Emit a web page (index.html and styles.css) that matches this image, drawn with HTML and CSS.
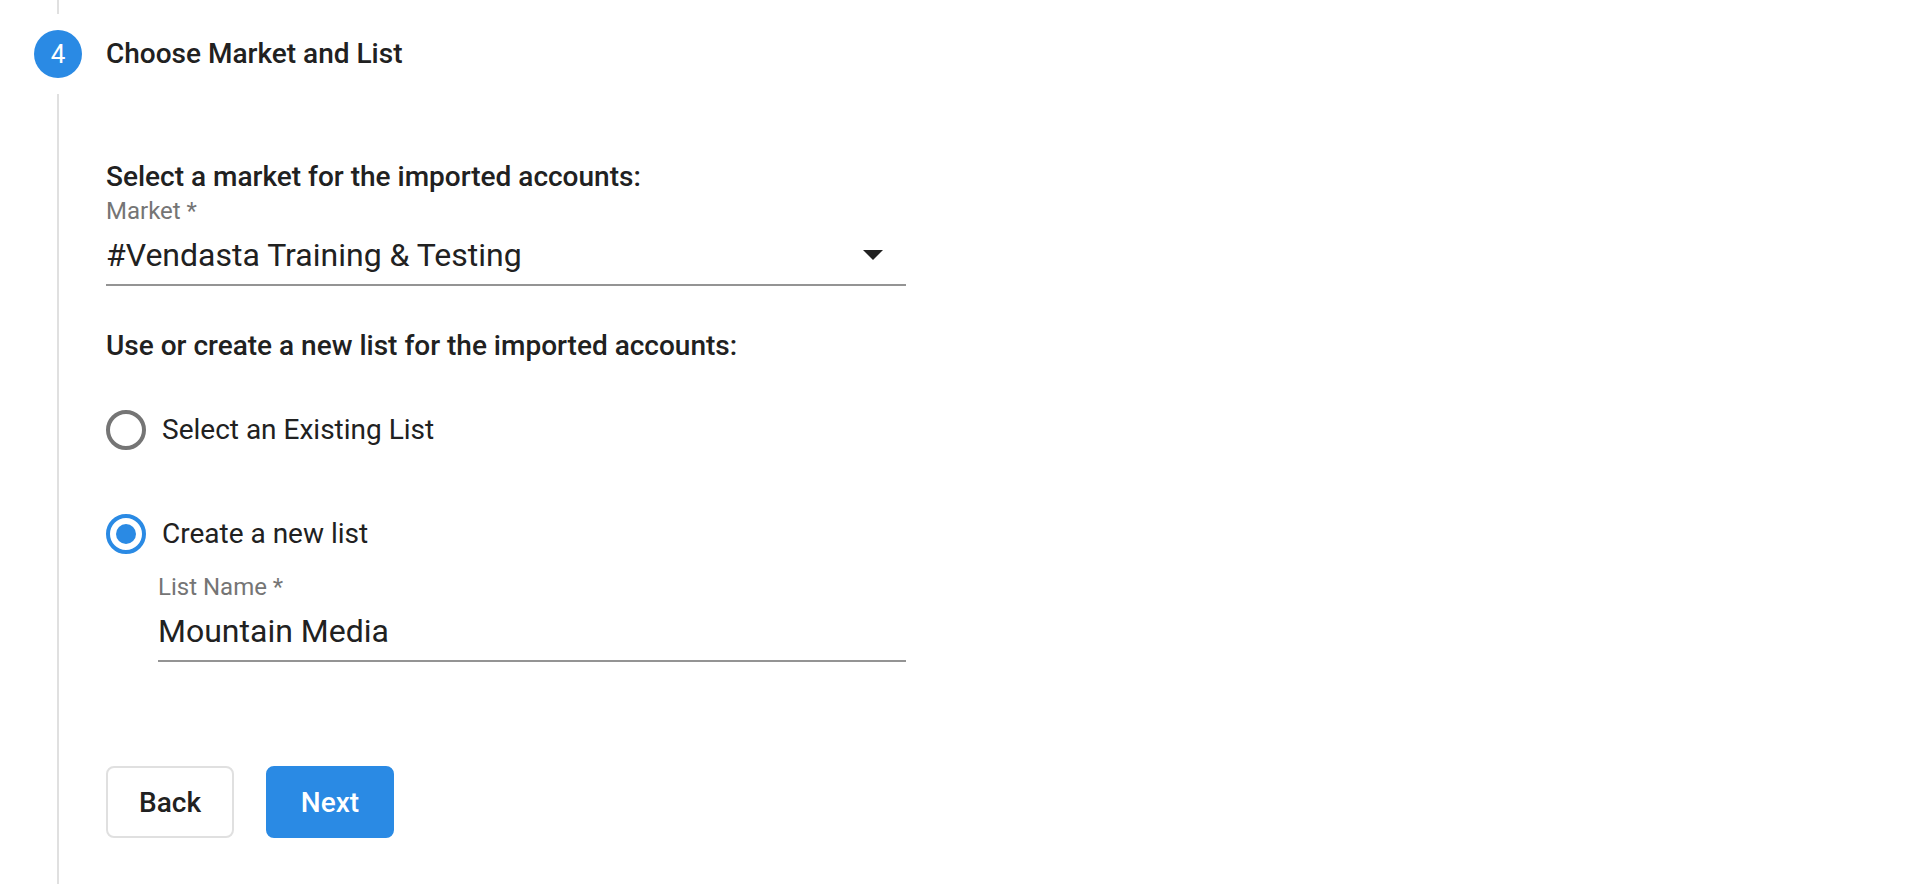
FILE: index.html
```html
<!DOCTYPE html>
<html lang="en">
<head>
<meta charset="utf-8">
<title>Choose Market and List</title>
<link rel="stylesheet" href="styles.css">
</head>
<body>
<div class="stepper">
  <div class="rail-top"></div>
  <div class="step-header">
    <div class="step-icon">4</div>
    <div class="step-title">Choose Market and List</div>
  </div>
  <div class="step-content">
    <div class="section-title">Select a market for the imported accounts:</div>
    <div class="field market-field">
      <div class="field-label">Market *</div>
      <div class="field-control">
        <span class="field-value">#Vendasta Training &amp; Testing</span>
        <span class="select-arrow"></span>
      </div>
    </div>
    <div class="section-title list-title">Use or create a new list for the imported accounts:</div>
    <div class="radio-group">
      <div class="radio-row">
        <span class="radio"></span>
        <span class="radio-label">Select an Existing List</span>
      </div>
      <div class="radio-row">
        <span class="radio checked"></span>
        <span class="radio-label">Create a new list</span>
      </div>
    </div>
    <div class="field list-field">
      <div class="field-label">List Name *</div>
      <div class="field-control">
        <span class="field-value">Mountain Media</span>
      </div>
    </div>
    <div class="actions">
      <button class="btn btn-back">Back</button>
      <button class="btn btn-next">Next</button>
    </div>
  </div>
</div>
</body>
</html>
```
FILE: styles.css
```css
html, body {
  margin: 0;
  padding: 0;
  background: #ffffff;
}
body {
  font-family: Roboto, "Noto Sans", Arial, sans-serif;
  color: #212121;
  overflow: hidden;
}
.stepper {
  display: flex;
  flex-direction: column;
}
.rail-top {
  width: 2px;
  height: 14px;
  margin-left: 57px;
  background: #e0e0e0;
}
.step-header {
  display: flex;
  align-items: center;
  height: 80px;
  padding-left: 34px;
}
.step-icon {
  width: 48px;
  height: 48px;
  border-radius: 50%;
  background: #2a8ae4;
  color: #ffffff;
  font-size: 26px;
  display: flex;
  align-items: center;
  justify-content: center;
}
.step-title {
  margin-left: 24px;
  font-size: 28px;
  font-weight: 500;
  line-height: 36px;
}
.step-content {
  margin-left: 57px;
  border-left: 2px solid #e0e0e0;
  padding-left: 47px;
  padding-top: 65px;
  min-height: 790px;
  box-sizing: border-box;
}
.section-title {
  font-size: 28px;
  font-weight: 500;
  line-height: 36px;
  color: #212121;
}
.field {
  width: 800px;
}
.market-field {
  margin-top: 2px;
}
.field-label {
  font-size: 24px;
  line-height: 28px;
  color: #757575;
}
.field-control {
  display: flex;
  align-items: center;
  margin-top: 10px;
  padding-bottom: 9px;
  border-bottom: 2px solid #949494;
}
.field-value {
  flex: 1;
  font-size: 32px;
  line-height: 40px;
  color: #212121;
}
.select-arrow {
  width: 0;
  height: 0;
  border-left: 10px solid transparent;
  border-right: 10px solid transparent;
  border-top: 10px solid #222222;
  margin-right: 23px;
}
.list-title {
  margin-top: 42px;
}
.radio-group {
  display: flex;
  flex-direction: column;
  gap: 64px;
  margin-top: 46px;
}
.radio-row {
  display: flex;
  align-items: center;
  gap: 16px;
  height: 40px;
}
.radio {
  width: 40px;
  height: 40px;
  box-sizing: border-box;
  border: 4px solid #757575;
  border-radius: 50%;
  display: flex;
  align-items: center;
  justify-content: center;
  flex: none;
}
.radio.checked {
  border-color: #2a8ae4;
}
.radio.checked::after {
  content: "";
  width: 20px;
  height: 20px;
  border-radius: 50%;
  background: #2a8ae4;
}
.radio-label {
  font-size: 28px;
  line-height: 36px;
}
.list-field {
  width: 748px;
  margin-left: 52px;
  margin-top: 19px;
}
.actions {
  display: flex;
  gap: 32px;
  margin-top: 104px;
}
.btn {
  width: 128px;
  height: 72px;
  border-radius: 8px;
  font-family: Roboto, "Noto Sans", Arial, sans-serif;
  font-size: 28px;
  font-weight: 500;
  padding: 0;
  box-sizing: border-box;
  cursor: pointer;
}
.btn-back {
  background: #ffffff;
  border: 2px solid #e0e0e0;
  color: #212121;
}
.btn-next {
  background: #2a8ae4;
  border: 2px solid #2a8ae4;
  color: #ffffff;
}
```
